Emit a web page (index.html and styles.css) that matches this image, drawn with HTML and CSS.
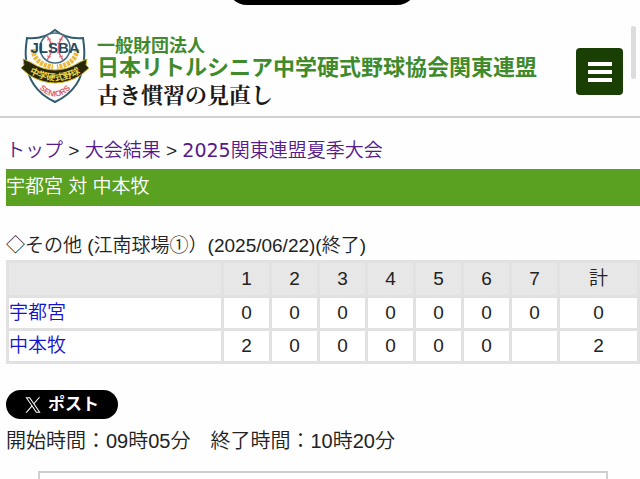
FILE: index.html
```
<!DOCTYPE html>
<html lang="ja">
<head>
	<meta charset="utf-8">
	<meta name="viewport" content="width=device-width, initial-scale=1">
	<title>宇都宮 対 中本牧</title>
	<link rel="stylesheet" href="styles.css">
</head>
<body>
	<div class="notch"></div>
	<div class="scroll-thumb"></div>

	<header class="header">
		<svg class="emblem" viewBox="0 0 70 76" role="img" aria-label="JLSBA">
			<path d="M35 2C28 8 18 11 7 10C6 18 5 23 6 31C7 53 18 66 35 74C52 66 63 53 64 31C65 23 64 18 63 10C52 11 42 8 35 2Z" fill="#fff" stroke="#315b6e" stroke-width="2"/>
			<circle cx="35" cy="20" r="15" fill="#fff" stroke="#416c83" stroke-width="1.5"/>
			<g fill="none" stroke="#e26775" stroke-width="1.5">
				<path d="M27 8Q36 20 27 32M43 8Q34 20 43 32"/>
				<path d="M27 12l4-1M29 16l4-1M29 24l4 1M27 28l4 1M43 12l-4-1M41 16l-4-1M41 24l-4 1M43 28l-4 1" stroke-width="1"/>
			</g>
			<g fill="none" stroke="#edb83c" stroke-width="5" stroke-dasharray="3 1">
				<path d="M13 21Q14 36 33 39"/>
				<path d="M57 21Q56 36 37 39"/>
			</g>
			<text class="emblem-name" x="35" y="25" text-anchor="middle">JLSBA</text>
			<path d="M3 31L10 34Q35 50 60 34L67 31L66 37L69 40L61 47Q35 63 9 47L1 40L4 37Z" fill="#282709" stroke="#c9b52b" stroke-width="1"/>
			<path id="ribbon" d="M8 44Q35 61 62 44" fill="none"/>
			<text class="emblem-ribbon"><textPath href="#ribbon" startOffset="50%" text-anchor="middle">中学硬式野球</textPath></text>
			<path id="seniors" d="M17 58Q35 79 53 58" fill="none"/>
			<text class="emblem-seniors"><textPath href="#seniors" startOffset="50%" text-anchor="middle">SENIORS</textPath></text>
		</svg>
		<div class="brand">
			<span class="brand-type">一般財団法人</span>
			<span class="brand-name">日本リトルシニア中学硬式野球協会関東連盟</span>
			<span class="brand-slogan">古き慣習の見直し</span>
		</div>
		<button class="menu" type="button" aria-label="メニュー">
			<svg viewBox="0 0 24 20"><path d="M0 2H24M0 10H24M0 18H24" stroke="#fff" stroke-width="4"/></svg>
		</button>
	</header>

	<main class="content">
		<nav class="crumbs">
			<a href="#">トップ</a> &gt; <a href="#">大会結果</a> &gt; <a href="#"><span class="year">2025</span>関東連盟夏季大会</a>
		</nav>
		<h1 class="match">宇都宮 対 中本牧</h1>

		<p class="venue">◇その他 (江南球場①）(2025/06/22)(終了)</p>
		<table class="score">
			<colgroup>
				<col>
				<col class="inning" span="7">
				<col class="total">
			</colgroup>
			<thead>
				<tr><th></th><th>1</th><th>2</th><th>3</th><th>4</th><th>5</th><th>6</th><th>7</th><th>計</th></tr>
			</thead>
			<tbody>
				<tr><th><a href="#">宇都宮</a></th><td>0</td><td>0</td><td>0</td><td>0</td><td>0</td><td>0</td><td>0</td><td>0</td></tr>
				<tr><th><a href="#">中本牧</a></th><td>2</td><td>0</td><td>0</td><td>0</td><td>0</td><td>0</td><td></td><td>2</td></tr>
			</tbody>
		</table>

		<a class="post" href="#">
			<svg viewBox="0 0 24 24" fill="#fff"><path d="M14.2 10.2L22.7 0.5H20.7L13.3 8.9L7.5 0.5H0.7L9.6 13.2L0.7 23.5H2.7L10.5 14.6L16.6 23.5H23.4ZM3.5 2H6.6L20.6 22H17.5Z"/></svg>
			ポスト
		</a>
		<p class="times">開始時間：09時05分　終了時間：10時20分</p>
		<section class="panel"></section>
	</main>
</body>
</html>
```
FILE: styles.css
```
* {
	box-sizing: border-box;
}

body {
	margin: 0;
	font-family: "Liberation Sans", "Noto Sans CJK JP", sans-serif;
	font-size: 19px;
	font-weight: 350;
	line-height: 28px;
	color: #222;
	background: #fefefe;
	overflow: hidden;
}

.notch {
	position: absolute;
	top: -24px;
	left: 50%;
	width: 190px;
	height: 29px;
	margin-left: -93px;
	border-radius: 0 0 20px 20px;
	background: #000;
}

.scroll-thumb {
	position: absolute;
	top: 26px;
	right: 4px;
	width: 5px;
	height: 53px;
	border-radius: 3px;
	background: #dcdcdc;
}

/* header */
.header {
	display: flex;
	align-items: flex-start;
	padding: 28px 17px 8px 20px;
	border-bottom: 2px solid #d0d0d0;
}

.emblem {
	width: 70px;
	height: 76px;
	flex: none;
}

.emblem-name {
	font: 700 15px "Liberation Sans", sans-serif;
	fill: #244b60;
}

.emblem-ribbon {
	font: 700 9px "Noto Sans CJK JP", sans-serif;
	fill: #e9d64a;
}

.emblem-seniors {
	font: 700 8px "Liberation Sans", sans-serif;
	fill: #d96570;
}

.brand {
	display: flex;
	flex-direction: column;
	flex: 1;
	margin-left: 7px;
	padding-top: 6px;
	font-family: "Noto Sans CJK JP", sans-serif;
	font-weight: 700;
	white-space: nowrap;
	color: #3f8b2c;
}

.brand-type {
	font-size: 18px;
	line-height: 20px;
}

.brand-name {
	font-size: 22px;
	line-height: 22px;
}

.brand-slogan {
	padding-top: 4px;
	font-family: "Noto Serif CJK JP", "Noto Sans CJK JP", serif;
	font-size: 22px;
	line-height: 28px;
	color: #1a1a1a;
}

.menu {
	display: flex;
	align-items: center;
	justify-content: center;
	width: 47px;
	height: 47px;
	margin-top: 20px;
	padding: 0;
	border: 0;
	border-radius: 4px;
	background: #193f04;
}

.menu svg {
	width: 24px;
	height: 20px;
}

/* page */
.content {
	padding: 18px 0 0 6px;
}

a {
	color: #1414cc;
	text-decoration: none;
}

.crumbs {
	padding-bottom: 4px;
}

.crumbs a {
	color: #551a8b;
}

.year {
	font-family: "DejaVu Sans", sans-serif;
	font-weight: 400;
}

.match {
	margin: 0 0 26px;
	padding: 4px 0 5px;
	font-size: 19px;
	font-weight: 350;
	color: #fff;
	background: #5aa122;
}

.venue {
	margin: 0;
}

.score {
	width: 100%;
	table-layout: fixed;
	border-spacing: 3px;
	background: #e1e1e1;
}

.inning {
	width: 45px;
}

.total {
	width: 77px;
}

.score th,
.score td {
	height: 30px;
	padding: 0;
	font-weight: 350;
	text-align: center;
	background: #fff;
}

.score thead th {
	height: 32px;
	background: #e7e7e7;
}

.score tbody th {
	text-align: left;
}

.post {
	display: inline-flex;
	align-items: center;
	gap: 7px;
	margin-top: 26px;
	padding: 0 19px;
	border-radius: 15px;
	font-size: 17px;
	font-weight: 700;
	line-height: 29px;
	color: #fff;
	background: #000;
}

.post svg {
	width: 16px;
	height: 16px;
}

.times {
	margin: 0;
	font-size: 20px;
	line-height: 40px;
}

.panel {
	height: 80px;
	margin: 10px 32px 0;
	border: 2px solid #d0d0d0;
}
```
